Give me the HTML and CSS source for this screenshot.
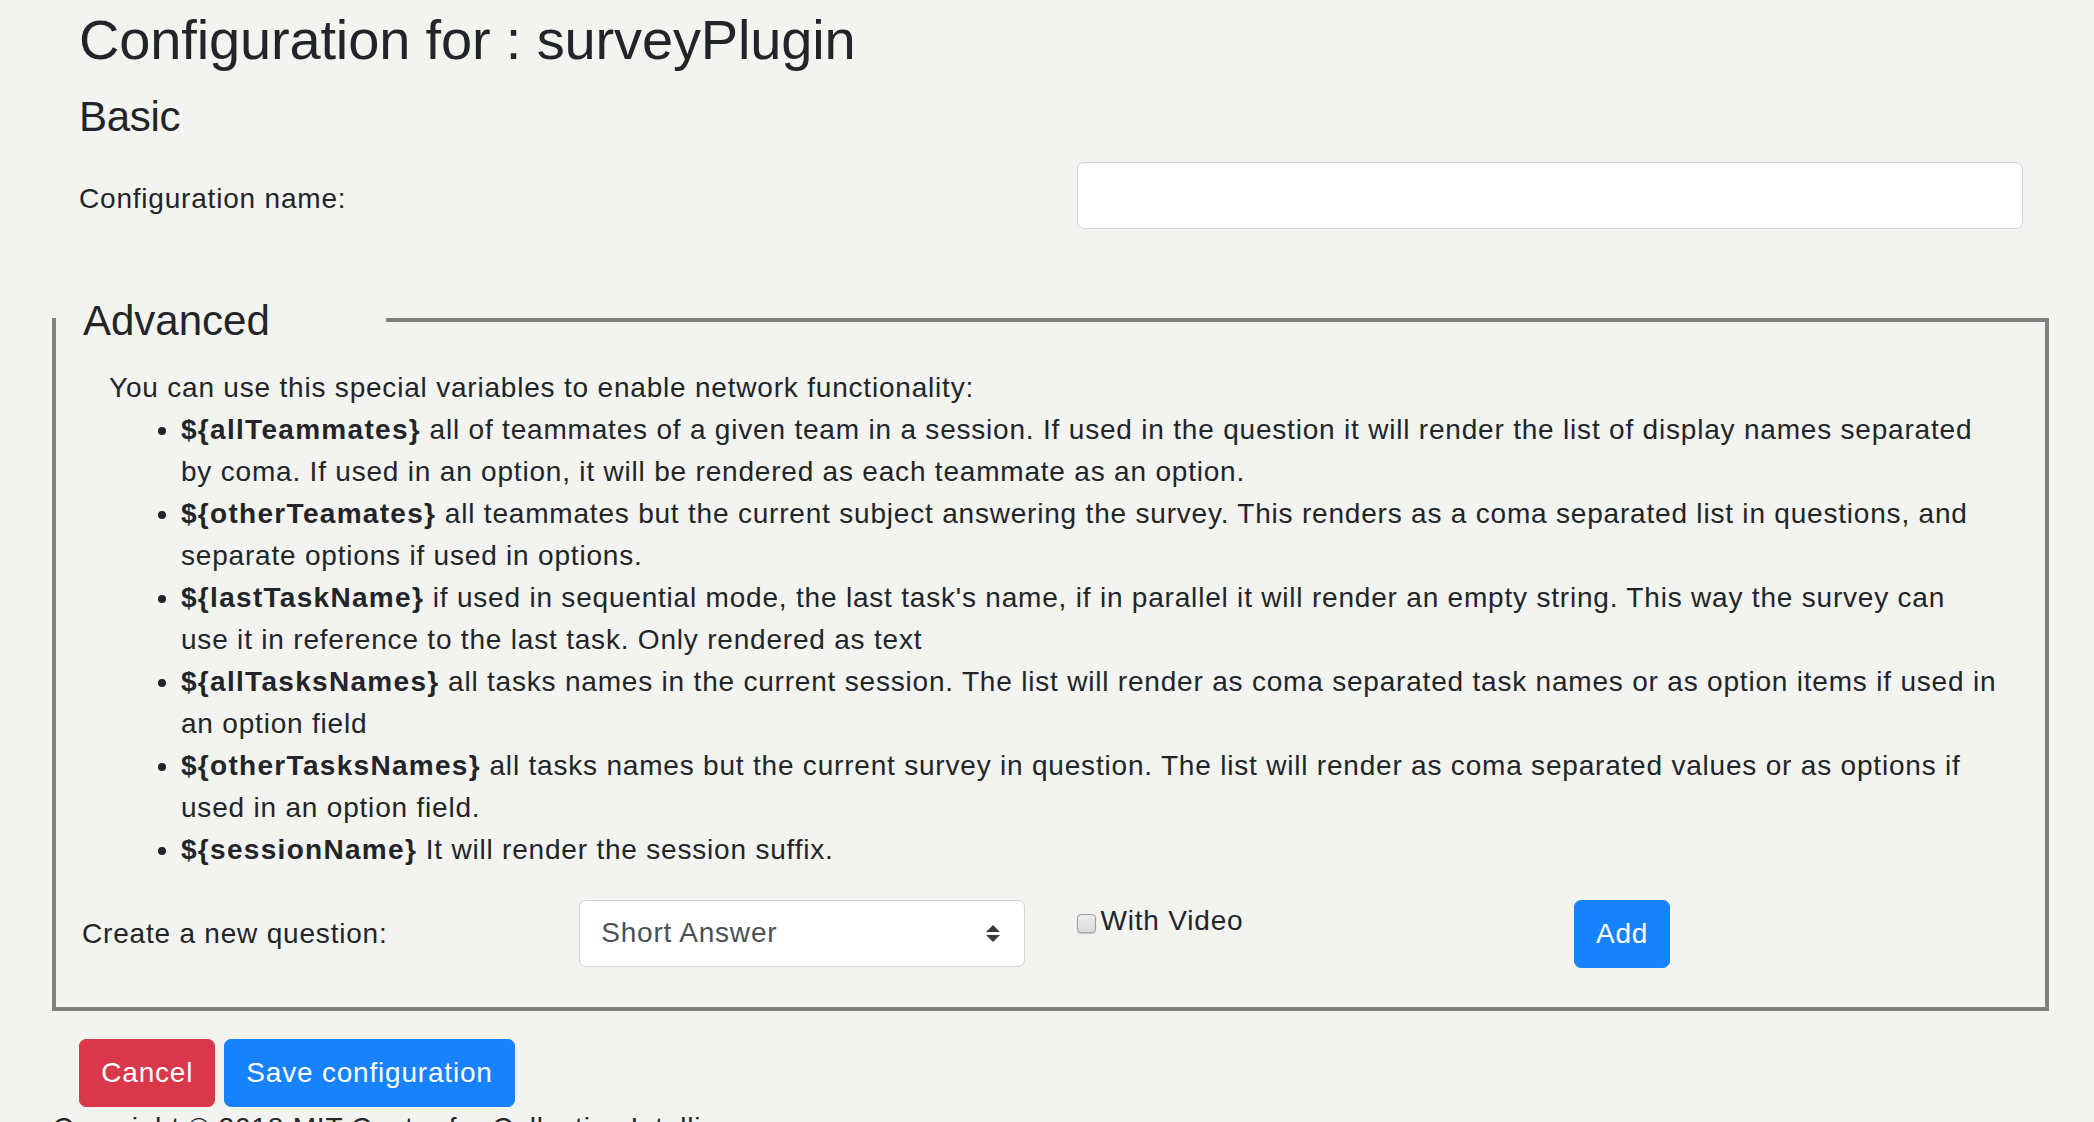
FILE: index.html
```html
<!DOCTYPE html>
<html lang="en">
<head>
<meta charset="utf-8">
<title>Configuration for : surveyPlugin</title>
<link rel="stylesheet" href="styles.css">
</head>
<body>
<div class="page">
  <h2 class="title">Configuration for : surveyPlugin</h2>
  <h4 class="section">Basic</h4>
  <div class="basic-row">
    <div class="col"><label class="col-label" for="cfgname">Configuration name:</label></div>
    <div class="col"><input id="cfgname" class="form-control" type="text"></div>
  </div>
  <fieldset class="advanced">
    <legend>Advanced</legend>
    <div class="adv-body">
      <p class="intro">You can use this special variables to enable network functionality:</p>
      <ul class="vars">
        <li><strong>${allTeammates}</strong> all of teammates of a given team in a session. If used in the question it will render the list of display names separated by coma. If used in an option, it will be rendered as each teammate as an option.</li>
        <li><strong>${otherTeamates}</strong> all teammates but the current subject answering the survey. This renders as a coma separated list in questions, and separate options if used in options.</li>
        <li><strong>${lastTaskName}</strong> if used in sequential mode, the last task's name, if in parallel it will render an empty string. This way the survey can use it in reference to the last task. Only rendered as text</li>
        <li><strong>${allTasksNames}</strong> all tasks names in the current session. The list will render as coma separated task names or as option items if used in an option field</li>
        <li><strong>${otherTasksNames}</strong> all tasks names but the current survey in question. The list will render as coma separated values or as options if used in an option field.</li>
        <li><strong>${sessionName}</strong> It will render the session suffix.</li>
      </ul>
    </div>
    <div class="question-row">
      <div class="qcol"><label class="col-label" for="qtype">Create a new question:</label></div>
      <div class="qcol">
        <select id="qtype" class="form-select">
          <option>Short Answer</option>
          <option>Long Answer</option>
          <option>Multiple Choice</option>
        </select>
      </div>
      <div class="qcol"><label class="check"><input type="checkbox" class="check-box">With Video</label></div>
      <div class="qcol"><button class="btn btn-primary" type="button">Add</button></div>
    </div>
  </fieldset>
  <div class="actions">
    <button class="btn btn-danger" type="button">Cancel</button>
    <button class="btn btn-primary" type="button">Save configuration</button>
  </div>
  <footer class="footer">Copyright © 2018 MIT Center for Collective Intelligence</footer>
</div>
</body>
</html>
```

FILE: styles.css
```css
html, body {
  margin: 0;
  padding: 0;
}
body {
  background: #f3f3ef;
  color: #212529;
  font-family: "Liberation Sans", Arial, sans-serif;
  font-size: 28px;
  line-height: 42px;
  letter-spacing: 0.8px;
  overflow: hidden;
}
strong {
  font-weight: 700;
  letter-spacing: 1.3px;
}
.page {
  padding: 6px 45px 0 53px;
}
.title {
  margin: 0 0 18.8px;
  padding-left: 26px;
  font-size: 56px;
  line-height: 67.2px;
  font-weight: 400;
  letter-spacing: -0.15px;
}
.section {
  margin: 0 0 19.6px;
  padding-left: 26px;
  font-size: 42px;
  line-height: 50.4px;
  font-weight: 400;
  letter-spacing: -0.3px;
}
.basic-row {
  display: grid;
  grid-template-columns: 1fr 1fr;
}
.col {
  padding: 0 26px;
}
.col-label {
  display: block;
  padding-top: 13px;
}
.basic-row .col-label {
  padding-top: 15.5px;
}
.form-control {
  display: block;
  box-sizing: border-box;
  width: 100%;
  height: 67px;
  margin: 0;
  padding: 0 21px;
  font: inherit;
  letter-spacing: inherit;
  color: #495057;
  background: #fff;
  border: 1.75px solid #ced4da;
  border-radius: 7px;
}
.advanced {
  margin: 59.5px 0 0 -1px;
  padding: 0 0 39px;
  min-width: 0;
  border: 4px solid #808080;
}
.advanced legend {
  box-sizing: border-box;
  width: 330px;
  padding: 0 0 0 27px;
  margin-bottom: 15px;
  font-size: 42px;
  line-height: 63px;
  letter-spacing: 0;
}
.adv-body {
  padding: 0 47px 0 53px;
}
.intro {
  margin: 0;
}
.vars {
  margin: 0 0 29px;
  padding-left: 72px;
}
.question-row {
  display: grid;
  grid-template-columns: repeat(4, 1fr);
  align-items: start;
}
.qcol {
  padding: 0 26px;
}
.form-select {
  display: block;
  box-sizing: border-box;
  width: 100%;
  height: 67px;
  margin: 0;
  padding: 0 21px;
  font: inherit;
  letter-spacing: inherit;
  color: #495057;
  background: #fff url("data:image/svg+xml;utf8,<svg xmlns='http://www.w3.org/2000/svg' width='14' height='17' viewBox='0 0 14 17'><polygon points='7,0 14,7 0,7' fill='%23343a40'/><polygon points='0,10 14,10 7,17' fill='%23343a40'/></svg>") no-repeat right 24px center / 14px 17px;
  border: 1.75px solid #ced4da;
  border-radius: 7px;
  -webkit-appearance: none;
  appearance: none;
}
.check {
  display: block;
}
.check-box {
  -webkit-appearance: none;
  appearance: none;
  box-sizing: border-box;
  width: 19px;
  height: 19px;
  margin: 0 5px 0 0;
  vertical-align: -3px;
  background: linear-gradient(#ececec, #dcdcdc);
  border: 1.5px solid #9f9f9f;
  border-radius: 4px;
  box-shadow: 0 1px 1px rgba(0, 0, 0, 0.2);
}
.btn {
  display: inline-block;
  box-sizing: border-box;
  height: 68px;
  margin: 0;
  padding: 0 21.25px;
  font: inherit;
  letter-spacing: inherit;
  line-height: 64px;
  color: #fff;
  border: 1.75px solid transparent;
  border-radius: 7px;
  cursor: pointer;
}
.btn-primary {
  background: #1782fb;
  border-color: #1782fb;
}
.btn-danger {
  background: #d9374a;
  border-color: #d9374a;
}
.actions {
  margin-top: 28px;
  padding-left: 26px;
}
.footer {
  line-height: 42px;
}
```
